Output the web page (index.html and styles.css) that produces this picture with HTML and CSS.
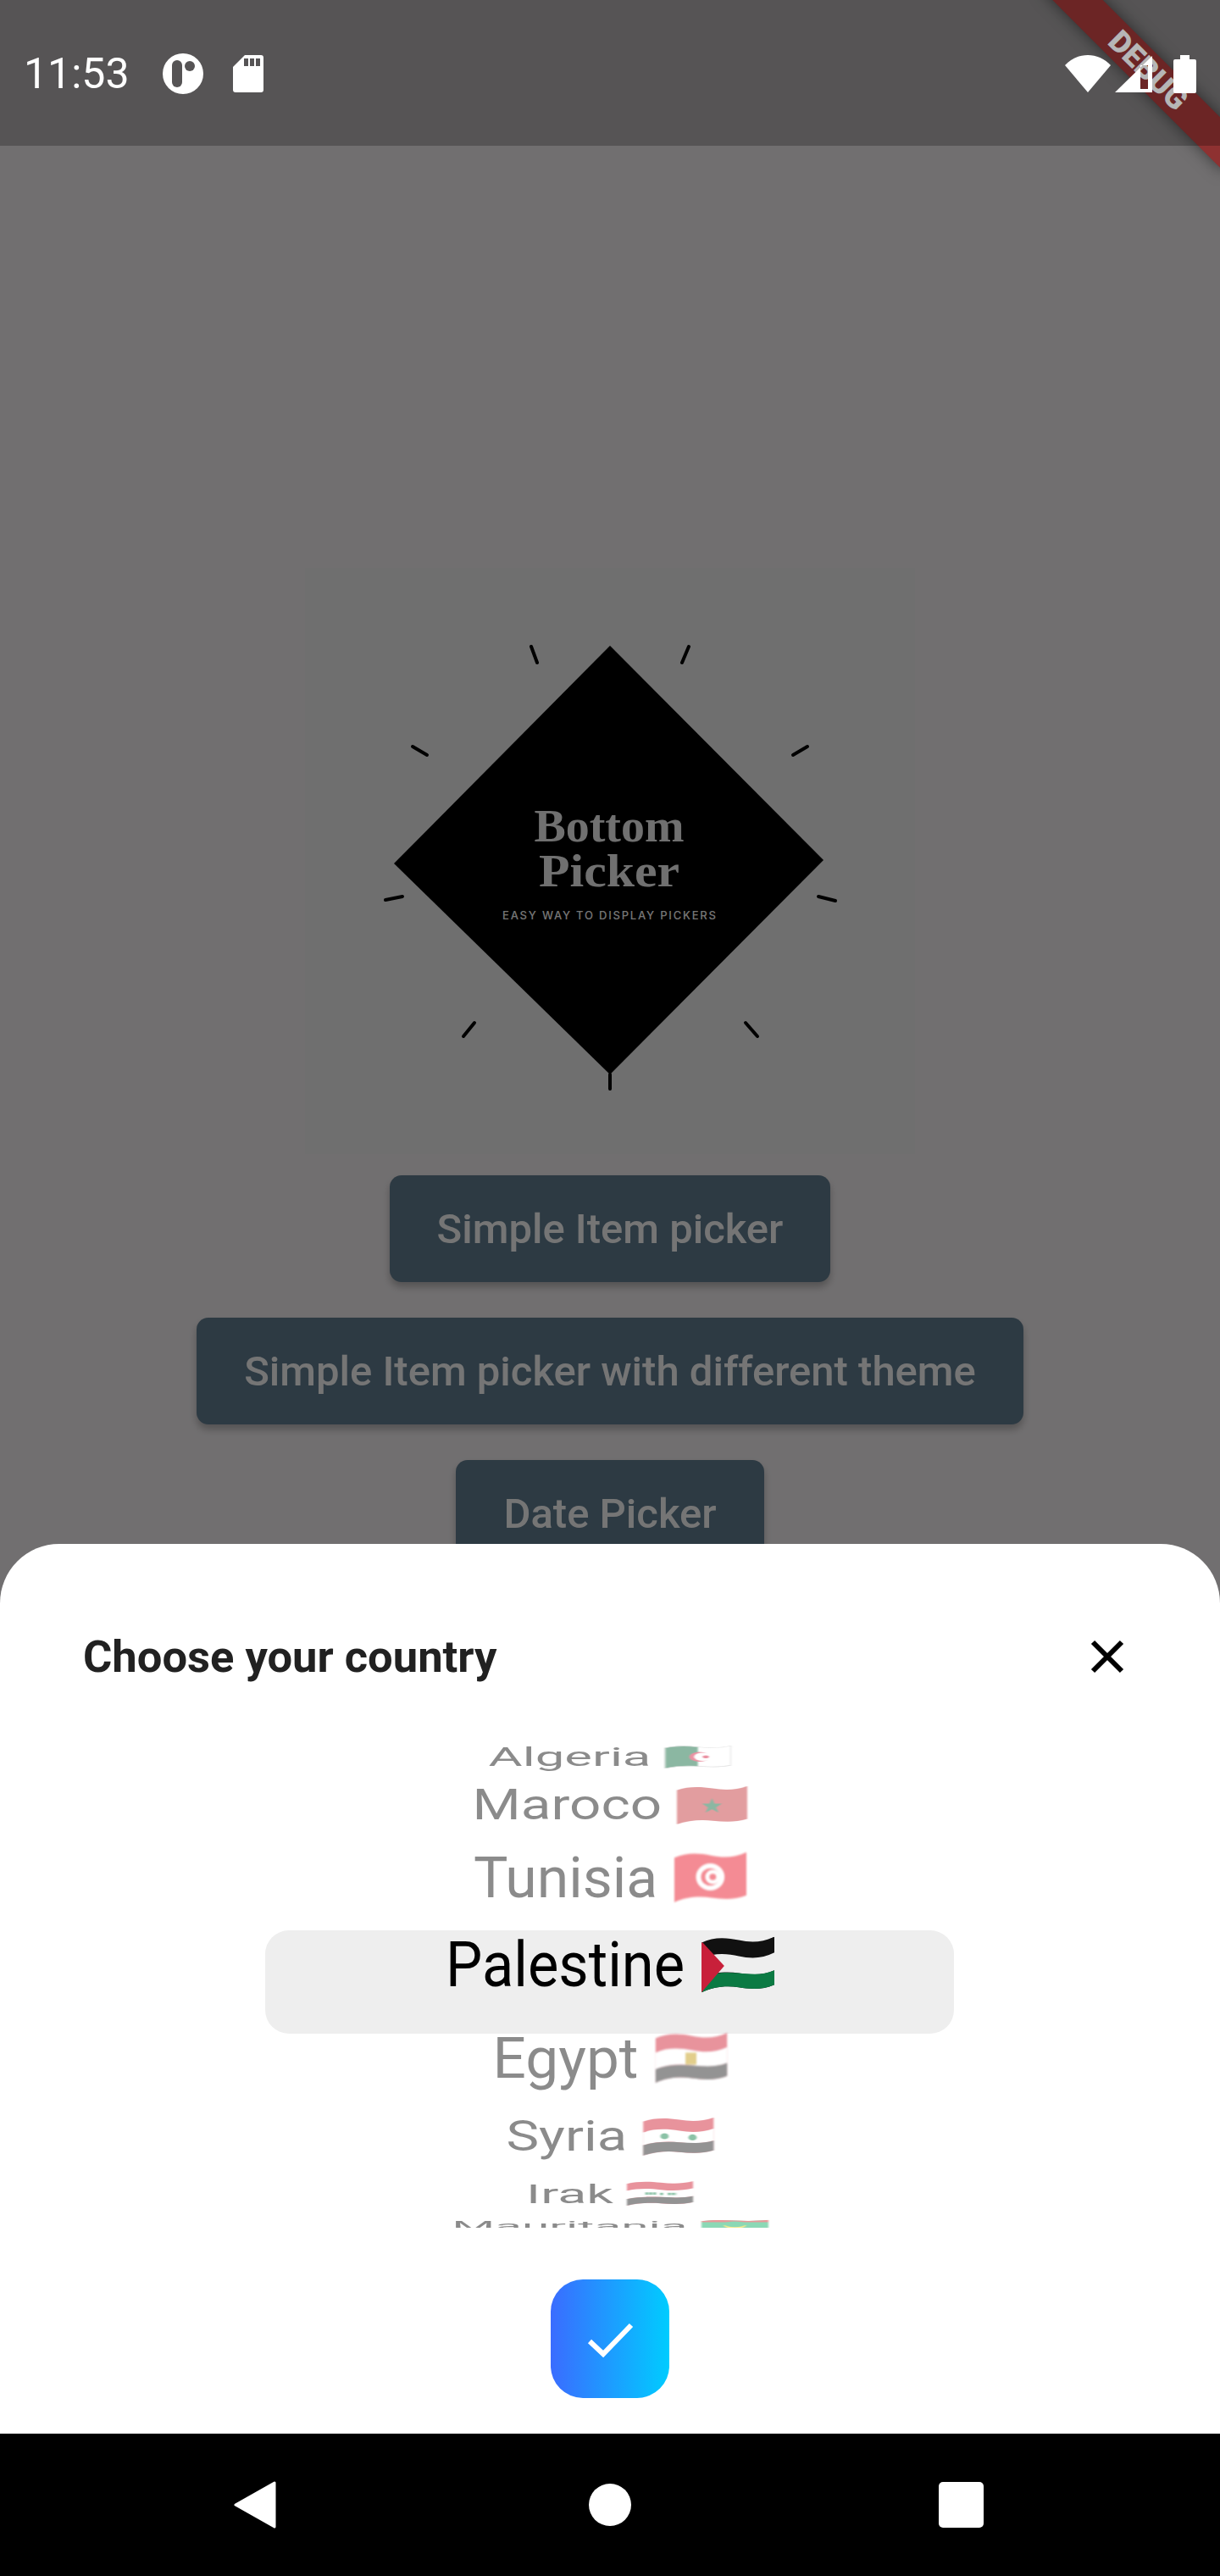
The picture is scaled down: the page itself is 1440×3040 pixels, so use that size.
FILE: index.html
```html
<!DOCTYPE html>
<html lang="en">
<head>
    <meta charset="UTF-8">
    <title>Bottom Picker</title>
    <link rel="stylesheet" href="styles.css">
</head>
<body>
<div class="phone">
    <svg class="flag-defs" width="0" height="0">
        <defs>
            <clipPath id="wave"><path d="M0 7C14 0 30 1 44 4S72 7 86 0V54C72 60 58 59 44 57S14 56 0 63Z"/></clipPath>
            <path id="band-mid" d="M0 25C14 18 30 19 44 22S72 25 86 18V38C72 44 58 43 44 41S14 40 0 46Z"/>
            <path id="band-low" d="M0 46C14 40 30 40 44 41S72 44 86 38V63H0Z"/>
        </defs>
    </svg>

    <main class="page">
        <svg class="logo" viewBox="360 670 720 692">
            <polygon points="720,762 972,1015 720,1268 465,1019" fill="#000"/>
            <g stroke="#000" stroke-width="4" stroke-linecap="round">
                <line x1="627" y1="763" x2="634" y2="782"/>
                <line x1="813" y1="763" x2="805" y2="782"/>
                <line x1="487" y1="881" x2="504" y2="891"/>
                <line x1="953" y1="881" x2="936" y2="891"/>
                <line x1="455" y1="1062" x2="475" y2="1058"/>
                <line x1="986" y1="1063" x2="966" y2="1058"/>
                <line x1="560" y1="1207" x2="547" y2="1223"/>
                <line x1="880" y1="1207" x2="894" y2="1223"/>
                <line x1="720" y1="1268" x2="720" y2="1285"/>
            </g>
            <text class="logo-title" x="719" y="993" text-anchor="middle" textLength="177" lengthAdjust="spacingAndGlyphs">Bottom</text>
            <text class="logo-title" x="719" y="1046" text-anchor="middle" textLength="166" lengthAdjust="spacingAndGlyphs">Picker</text>
            <text class="logo-tag" x="719" y="1085" text-anchor="middle" textLength="252">EASY WAY TO DISPLAY PICKERS</text>
        </svg>
        <div class="buttons">
            <button class="btn">Simple Item picker</button>
            <button class="btn">Simple Item picker with different theme</button>
            <button class="btn">Date Picker</button>
        </div>
    </main>

    <div class="scrim"></div>

    <div class="bottom">
        <section class="sheet">
            <div class="sheet-head">
                <h2 class="sheet-title">Choose your country</h2>
                <svg class="close" viewBox="0 0 40 40"><path d="M3 3L37 37M37 3L3 37" stroke="#000" stroke-width="6" fill="none"/></svg>
            </div>

            <div class="picker">
                <div class="picker-hl"></div>

                <div class="row row-algeria faded"><span>Algeria</span>
                    <svg class="flag" viewBox="0 0 86 63" preserveAspectRatio="none"><g clip-path="url(#wave)">
                        <rect width="43" height="63" fill="#006233"/><rect x="43" width="43" height="63" fill="#fff"/>
                        <path d="M0 7C14 0 30 1 44 4S72 7 86 0V54C72 60 58 59 44 57S14 56 0 63Z" fill="none" stroke="#bbb" stroke-width="3"/>
                        <circle cx="45" cy="31" r="13" fill="#d21034"/><circle cx="49" cy="31" r="11" fill="#fff"/>
                        <circle cx="53" cy="31" r="4" fill="#d21034"/>
                    </g></svg>
                </div>
                <div class="row row-maroco faded"><span>Maroco</span>
                    <svg class="flag" viewBox="0 0 86 63" preserveAspectRatio="none"><g clip-path="url(#wave)">
                        <rect width="86" height="63" fill="#c1272d"/>
                        <polygon points="43,20 46,29 55,29 48,35 51,44 43,38 35,44 38,35 31,29 40,29" fill="#006233"/>
                    </g></svg>
                </div>
                <div class="row row-tunisia faded"><span>Tunisia</span>
                    <svg class="flag" viewBox="0 0 86 63" preserveAspectRatio="none"><g clip-path="url(#wave)">
                        <rect width="86" height="63" fill="#e70013"/>
                        <circle cx="43" cy="31" r="17" fill="#fff"/><circle cx="43" cy="31" r="11" fill="#e70013"/>
                        <circle cx="46" cy="31" r="9" fill="#fff"/><circle cx="46" cy="31" r="4" fill="#e70013"/>
                    </g></svg>
                </div>
                <div class="row row-palestine"><span>Palestine</span>
                    <svg class="flag" viewBox="0 0 86 63" preserveAspectRatio="none"><g clip-path="url(#wave)">
                        <rect width="86" height="63" fill="#111"/>
                        <use href="#band-mid" fill="#eee"/><use href="#band-low" fill="#0b7a43"/>
                        <polygon points="0,5 27,33 0,63" fill="#c8203a"/>
                    </g></svg>
                </div>
                <div class="row row-egypt faded"><span>Egypt</span>
                    <svg class="flag" viewBox="0 0 86 63" preserveAspectRatio="none"><g clip-path="url(#wave)">
                        <rect width="86" height="63" fill="#ce1126"/>
                        <use href="#band-mid" fill="#fff"/><use href="#band-low" fill="#111"/>
                        <rect x="36" y="25" width="13" height="15" fill="#c09300"/>
                    </g></svg>
                </div>
                <div class="row row-syria faded"><span>Syria</span>
                    <svg class="flag" viewBox="0 0 86 63" preserveAspectRatio="none"><g clip-path="url(#wave)">
                        <rect width="86" height="63" fill="#ce1126"/>
                        <use href="#band-mid" fill="#fff"/><use href="#band-low" fill="#111"/>
                        <circle cx="26" cy="31" r="5" fill="#007a3d"/><circle cx="60" cy="33" r="5" fill="#007a3d"/>
                    </g></svg>
                </div>
                <div class="row row-irak faded"><span>Irak</span>
                    <svg class="flag" viewBox="0 0 86 63" preserveAspectRatio="none"><g clip-path="url(#wave)">
                        <rect width="86" height="63" fill="#ce1126"/>
                        <use href="#band-mid" fill="#fff"/><use href="#band-low" fill="#111"/>
                        <path d="M24 32H38M43 33H48M53 33H64" stroke="#007a3d" stroke-width="6" stroke-dasharray="4 1"/>
                    </g></svg>
                </div>
                <div class="row row-mauritania faded"><span>Mauritania</span>
                    <svg class="flag" viewBox="0 0 86 63" preserveAspectRatio="none"><g clip-path="url(#wave)">
                        <rect width="86" height="63" fill="#00a95c"/>
                        <rect width="86" height="12" fill="#d01c1f"/><rect y="50" width="86" height="13" fill="#d01c1f"/>
                        <circle cx="43" cy="28" r="14" fill="#ffd700"/><circle cx="43" cy="22" r="14" fill="#00a95c"/>
                    </g></svg>
                </div>
            </div>

            <button class="confirm">
                <svg viewBox="0 0 140 140" width="140" height="140"><path d="M46 73L62 88L95 54" stroke="#fff" stroke-width="6" fill="none"/></svg>
            </button>
        </section>

        <nav class="navbar">
            <svg class="nav-back" viewBox="0 0 50 56"><polygon points="48,2 48,54 2,28" fill="#fff" stroke="#fff" stroke-width="3" stroke-linejoin="round"/></svg>
            <span class="nav-home"></span>
            <span class="nav-recent"></span>
        </nav>
    </div>

    <div class="debug-banner">DEBUG</div>

    <header class="statusbar">
        <div class="status-left">
            <span class="clock">11:53</span>
            <svg class="ic-dot" viewBox="0 0 48 48"><circle cx="24" cy="24" r="24" fill="#fff"/><rect x="11" y="8" width="12" height="32" rx="6" fill="#565455"/><circle cx="32" cy="15" r="6" fill="#565455"/></svg>
            <svg class="ic-sd" viewBox="0 0 36 44"><path d="M14 0H33Q36 0 36 3V41Q36 44 33 44H3Q0 44 0 41V14Z" fill="#fff"/><path d="M13 4h5v9h-5zM20 4h5v9h-5zM27 4h5v9h-5z" fill="#565455"/></svg>
        </div>
        <div class="status-right">
            <svg class="ic-wifi" viewBox="0 0 54 44"><path d="M0 12C15 -4 39 -4 54 12L27 44Z" fill="#fff"/></svg>
            <svg class="ic-cell" viewBox="0 0 44 43"><path fill-rule="evenodd" d="M44 0V43H0ZM30 11V39H39V11Z" fill="#fff"/></svg>
            <svg class="ic-batt" viewBox="0 0 27 45"><path d="M8 0H19V5H25Q27 5 27 7V43Q27 45 25 45H2Q0 45 0 43V7Q0 5 2 5H8Z" fill="#fff"/></svg>
        </div>
    </header>
</div>
</body>
</html>
```

FILE: styles.css
```css
* {
    box-sizing: border-box;
}
body {
    margin: 0;
    background: #000;
    font-family: Roboto, "Liberation Sans", sans-serif;
}
.phone {
    position: relative;
    width: 1440px;
    height: 3040px;
    overflow: hidden;
    background: #f6f2f4;
}
.flag-defs {
    position: absolute;
}

/* page behind the sheet */
.page {
    display: flex;
    flex-direction: column;
    align-items: center;
    padding-top: 670px;
}
.logo {
    display: block;
    width: 720px;
    height: 692px;
    background: #f1f1f1;
}
.logo-title {
    font-family: "Liberation Serif", serif;
    font-weight: 700;
    font-size: 54px;
    fill: #f4f4f4;
}
.logo-tag {
    font-family: Inter, sans-serif;
    font-size: 13px;
    font-weight: 500;
    fill: #fff;
}
.buttons {
    display: flex;
    flex-direction: column;
    align-items: center;
    gap: 42px;
    margin-top: 25px;
}
.btn {
    height: 126px;
    padding: 0 56px;
    border: none;
    border-radius: 14px;
    background: #627e92;
    color: #fff;
    font-family: inherit;
    font-size: 49px;
    font-weight: 500;
    box-shadow: 0 6px 9px rgba(0, 0, 0, 0.25);
}
.scrim {
    position: absolute;
    inset: 0;
    background: rgba(0, 0, 0, 0.54);
}

/* bottom sheet */
.bottom {
    position: absolute;
    left: 0;
    right: 0;
    bottom: 0;
}
.sheet {
    display: flex;
    flex-direction: column;
    align-items: center;
    height: 1050px;
    padding-top: 103px;
    background: #fff;
    border-radius: 70px 70px 0 0;
}
.sheet-head {
    display: flex;
    justify-content: space-between;
    align-items: center;
    width: 100%;
    height: 60px;
    padding: 0 113px 0 98px;
}
.sheet-title {
    margin: 0;
    font-size: 52.5px;
    font-weight: 700;
    color: #212121;
}
.close {
    width: 40px;
    height: 40px;
}
.picker {
    position: relative;
    width: 100%;
    height: 577px;
    margin-top: 67px;
    overflow: hidden;
}
.picker-hl {
    position: absolute;
    top: 226px;
    left: 313px;
    width: 813px;
    height: 122px;
    background: #eee;
    border-radius: 28px;
}
.row {
    position: relative;
    display: flex;
    justify-content: center;
    align-items: center;
    gap: 20px;
    font-size: 70px;
    color: #000;
    white-space: nowrap;
}
.flag {
    width: 86px;
    height: 63px;
    flex: none;
}
.faded {
    opacity: 0.45;
}
.faded .flag {
    filter: blur(1px);
}

/* wheel rows: each one squashed a bit more the further it is from the middle */
.row-algeria {
    height: 43px;
    gap: 18px;
    transform: scale(0.88, 0.44);
}
.row-algeria .flag {
    width: 90px;
}
.row-maroco {
    height: 70px;
    gap: 19px;
    transform: scale(0.937, 0.72);
}
.row-maroco .flag {
    width: 89px;
}
.row-tunisia {
    height: 101px;
    transform: scale(0.97, 0.94);
}
.row-tunisia .flag {
    width: 88px;
}
.row-palestine {
    height: 105px;
    transform: scale(0.98, 1.05);
}
.row-palestine .flag {
    width: 88px;
}
.row-egypt {
    height: 115px;
    transform: scale(0.99, 0.94);
}
.row-syria {
    height: 70px;
    transform: scale(0.93, 0.72);
}
.row-syria .flag {
    width: 90px;
}
.row-irak {
    height: 65px;
    gap: 18px;
    transform: scale(0.895, 0.46);
}
.row-irak .flag {
    width: 88px;
}
.row-mauritania {
    height: 12px;
    gap: 19px;
    transform: scale(0.835, 0.24);
}
.row-mauritania .flag {
    width: 95px;
}
.confirm {
    width: 140px;
    height: 140px;
    margin-top: 61px;
    padding: 0;
    border: none;
    border-radius: 38px;
    background: linear-gradient(90deg, #3a6cff, #00ccff);
}
.confirm svg {
    display: block;
}

/* android nav */
.navbar {
    display: flex;
    align-items: center;
    height: 168px;
    padding-left: 276px;
    background: #000;
}
.nav-back {
    width: 50px;
    height: 56px;
}
.nav-home {
    width: 50px;
    height: 50px;
    margin-left: 369px;
    border-radius: 50%;
    background: #fff;
}
.nav-recent {
    width: 53px;
    height: 54px;
    margin-left: 363px;
    border-radius: 5px;
    background: #fff;
}

/* flutter debug ribbon */
.debug-banner {
    position: absolute;
    top: 60px;
    right: -63px;
    width: 300px;
    height: 42px;
    padding-left: 6px;
    transform: rotate(45deg);
    background: #8e3131;
    color: #f0f0f0;
    font-size: 36px;
    font-weight: 900;
    line-height: 42px;
    text-align: center;
    box-shadow: 0 0 18px rgba(0, 0, 0, 0.5);
}

/* status bar, sits on top of the ribbon */
.statusbar {
    position: absolute;
    top: 0;
    left: 0;
    right: 0;
    display: flex;
    justify-content: space-between;
    align-items: center;
    height: 172px;
    padding: 2px 28px 0 28px;
    background: rgba(0, 0, 0, 0.24);
}
.status-left,
.status-right {
    display: flex;
    align-items: center;
}
.clock {
    color: #fff;
    font-size: 50px;
    line-height: 60px;
}
.ic-dot {
    width: 48px;
    height: 48px;
    margin-left: 39px;
}
.ic-sd {
    width: 36px;
    height: 44px;
    margin-left: 35px;
}
.ic-wifi {
    width: 54px;
    height: 44px;
}
.ic-cell {
    width: 44px;
    height: 43px;
    margin-left: 5px;
}
.ic-batt {
    width: 27px;
    height: 45px;
    margin-left: 25px;
}
```
